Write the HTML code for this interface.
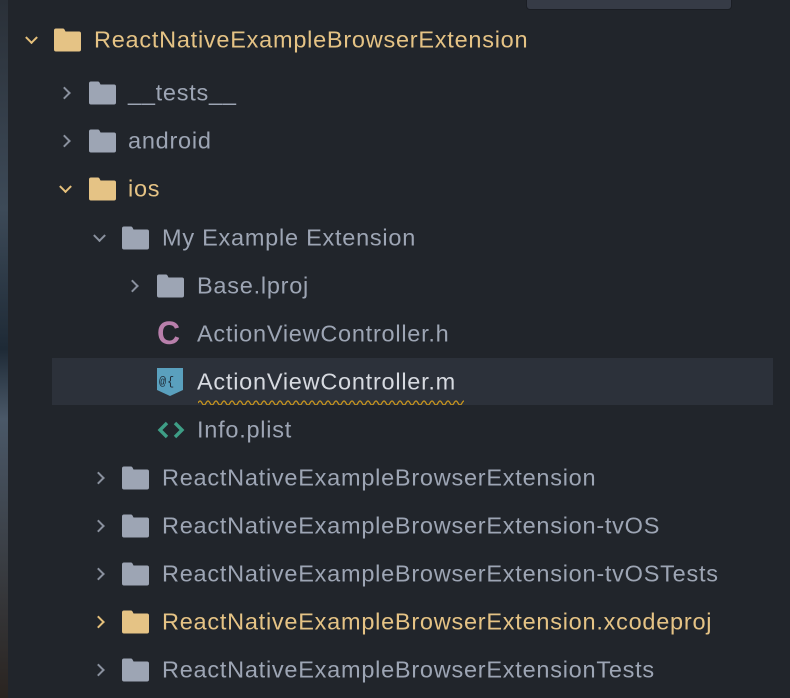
<!DOCTYPE html>
<html><head><meta charset="utf-8"><style>
*{margin:0;padding:0;box-sizing:border-box}
html,body{width:790px;height:698px;overflow:hidden;background:#21252b;font-family:"Liberation Sans",sans-serif}
.strip{position:absolute;left:0;top:0;width:8px;height:698px;background:linear-gradient(#2a3038,#3d4a58 30%,#1e2a36 50%,#4a5868 60%,#2a2420 100%)}
.box{position:absolute;left:526px;top:-4px;width:206px;height:14px;background:#363b46;border:1px solid #1b1e24;border-radius:4px}
.row{position:absolute;left:0;height:48px;width:790px;font-size:23.5px;letter-spacing:0.75px;color:#9da5b4;white-space:nowrap}
.row span.t{position:absolute;top:50%;transform:translateY(-50%)}
.sel{position:absolute;left:52px;top:358px;width:721px;height:47px;background:#2c313a}
.chev{position:absolute;top:50%;width:9px;height:9px;border-right:2.4px solid #8a919e;border-bottom:2.4px solid #8a919e}
.chev.r{transform:translate(-6px,-50%) rotate(-45deg)}
.chev.d{transform:translate(-4px,-75%) rotate(45deg)}
.y .chev{border-color:#e5c07b}
.y{color:#e5c385}
svg.f{position:absolute;top:50%;transform:translateY(-50%)}
</style></head><body>
<div class="strip"></div>
<div class="box"></div>
<div class="sel"></div>
<svg width="0" height="0" style="position:absolute"><defs>
<path id="fold" d="M1 3 Q1 1 3 1 H10 Q11 1 11.5 2 L12.5 4 H26 Q28 4 28 6 V22 Q28 24 26 24 H3 Q1 24 1 22 Z"/>
</defs></svg>
<div class="row y" style="top:16px"><i class="chev d" style="left:31px"></i><svg class="f" style="left:53px" width="29" height="25"><use href="#fold" fill="#e5c385"/></svg><span class="t" style="left:94px">ReactNativeExampleBrowserExtension</span></div>
<div class="row" style="top:69px"><i class="chev r" style="left:66px"></i><svg class="f" style="left:88px" width="29" height="25"><use href="#fold" fill="#9da5b4"/></svg><span class="t" style="left:128px">__tests__</span></div>
<div class="row" style="top:117px"><i class="chev r" style="left:66px"></i><svg class="f" style="left:88px" width="29" height="25"><use href="#fold" fill="#9da5b4"/></svg><span class="t" style="left:128px">android</span></div>
<div class="row y" style="top:165px"><i class="chev d" style="left:65px"></i><svg class="f" style="left:88px" width="29" height="25"><use href="#fold" fill="#e5c385"/></svg><span class="t" style="left:128px">ios</span></div>
<div class="row" style="top:214px"><i class="chev d" style="left:99px"></i><svg class="f" style="left:121px" width="29" height="25"><use href="#fold" fill="#9da5b4"/></svg><span class="t" style="left:162px">My Example Extension</span></div>
<div class="row" style="top:262px"><i class="chev r" style="left:134px"></i><svg class="f" style="left:156px" width="29" height="25"><use href="#fold" fill="#9da5b4"/></svg><span class="t" style="left:197px">Base.lproj</span></div>
<div class="row" style="top:310px"><span style="position:absolute;left:157px;top:50%;transform:translateY(-52%);font-weight:bold;font-size:32px;letter-spacing:0;color:#b87fab">C</span><span class="t" style="left:197px">ActionViewController.h</span></div>
<div class="row" style="top:358px;color:#d7dae0"><svg class="f" style="left:156px" width="28" height="30" viewBox="0 0 28 30"><path d="M1 1 H27 V23 L14 29 L1 23 Z" fill="#5aa0be"/><text x="3" y="18" font-size="12" font-family="Liberation Mono,monospace" fill="#1e2a36">@{</text></svg><span class="t" style="left:197px">ActionViewController.m</span>
<svg style="position:absolute;left:198px;top:42px" width="266" height="5"><path d="M0 3 q2-4 4 0 t4 0 t4 0 t4 0 t4 0 t4 0 t4 0 t4 0 t4 0 t4 0 t4 0 t4 0 t4 0 t4 0 t4 0 t4 0 t4 0 t4 0 t4 0 t4 0 t4 0 t4 0 t4 0 t4 0 t4 0 t4 0 t4 0 t4 0 t4 0 t4 0 t4 0 t4 0 t4 0 t4 0 t4 0 t4 0 t4 0 t4 0 t4 0 t4 0 t4 0 t4 0 t4 0 t4 0 t4 0 t4 0 t4 0 t4 0 t4 0 t4 0 t4 0 t4 0 t4 0 t4 0 t4 0 t4 0 t4 0 t4 0 t4 0 t4 0 t4 0 t4 0 t4 0 t4 0 t4 0 t4 0 t4 0 t4 0 t4 0 t4 0 t4 0" fill="none" stroke="#c8961e" stroke-width="1.3"/></svg></div>
<div class="row" style="top:406px"><svg class="f" style="left:157px" width="28" height="20"><path d="M10 3 L3 10 L10 17 M18 3 L25 10 L18 17" fill="none" stroke="#3e9e86" stroke-width="3.4"/></svg><span class="t" style="left:197px">Info.plist</span></div>
<div class="row" style="top:454px"><i class="chev r" style="left:100px"></i><svg class="f" style="left:121px" width="29" height="25"><use href="#fold" fill="#9da5b4"/></svg><span class="t" style="left:162px">ReactNativeExampleBrowserExtension</span></div>
<div class="row" style="top:502px"><i class="chev r" style="left:100px"></i><svg class="f" style="left:121px" width="29" height="25"><use href="#fold" fill="#9da5b4"/></svg><span class="t" style="left:162px">ReactNativeExampleBrowserExtension-tvOS</span></div>
<div class="row" style="top:550px"><i class="chev r" style="left:100px"></i><svg class="f" style="left:121px" width="29" height="25"><use href="#fold" fill="#9da5b4"/></svg><span class="t" style="left:162px">ReactNativeExampleBrowserExtension-tvOSTests</span></div>
<div class="row y" style="top:598px"><i class="chev r" style="left:100px"></i><svg class="f" style="left:121px" width="29" height="25"><use href="#fold" fill="#e5c385"/></svg><span class="t" style="left:162px">ReactNativeExampleBrowserExtension.xcodeproj</span></div>
<div class="row" style="top:646px"><i class="chev r" style="left:100px"></i><svg class="f" style="left:121px" width="29" height="25"><use href="#fold" fill="#9da5b4"/></svg><span class="t" style="left:162px">ReactNativeExampleBrowserExtensionTests</span></div>
</body></html>
